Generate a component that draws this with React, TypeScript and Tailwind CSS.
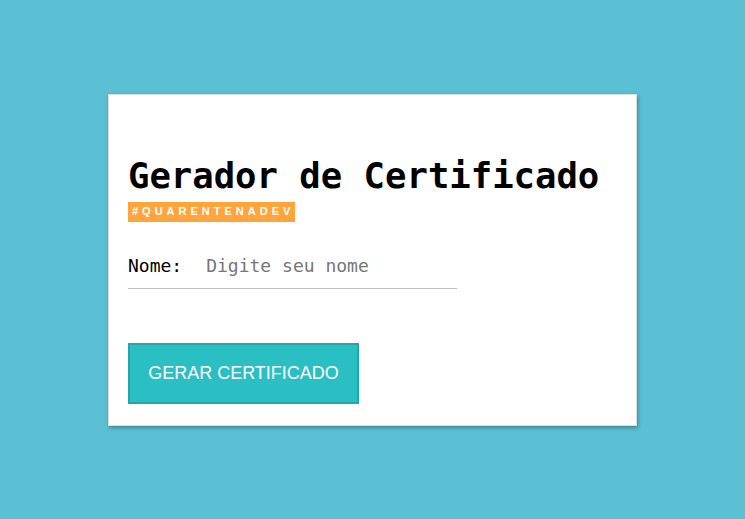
import React from "react";

export default function App() {
  return (
    <div className="flex min-h-screen w-full items-center justify-center bg-[#5bc0d3]">
      <div className="flex h-[332px] w-[529px] flex-col border border-[#dcdcdc] bg-white px-[19px] pt-[61px] shadow-[1px_2px_4px_rgba(0,0,0,0.3)]">
        <h1
          className="text-[35.6px] font-bold leading-[40px] text-black"
          style={{ fontFamily: '"DejaVu Sans Mono", "Liberation Mono", monospace' }}
        >
          Gerador de Certificado
        </h1>
        <div className="mt-[6px] flex">
          <span
            className="flex h-[20px] w-[167px] items-center bg-[#ffa53b] pl-[4px] text-[11px] font-bold tracking-[4px] text-white"
            style={{ fontFamily: '"Liberation Sans", Arial, sans-serif' }}
          >
            #QUARENTENADEV
          </span>
        </div>
        <div
          className="mt-[30px] flex w-[329px] items-center border-b border-[#c0c0c0] pb-[9px] text-[18px]"
          style={{ fontFamily: '"DejaVu Sans Mono", "Liberation Mono", monospace' }}
        >
          <label className="text-black">Nome:</label>
          <input
            className="ml-[24px] w-full bg-transparent text-[#222] outline-none placeholder:text-[#767676]"
            placeholder="Digite seu nome"
          />
        </div>
        <div className="mt-[54px] flex">
          <button
            className="flex h-[61px] w-[231px] items-center justify-center border-2 border-[#22a6a8] bg-[#2abfc2] text-[18px] text-white"
            style={{ fontFamily: '"Liberation Sans", Arial, sans-serif' }}
          >
            GERAR CERTIFICADO
          </button>
        </div>
      </div>
    </div>
  );
}
